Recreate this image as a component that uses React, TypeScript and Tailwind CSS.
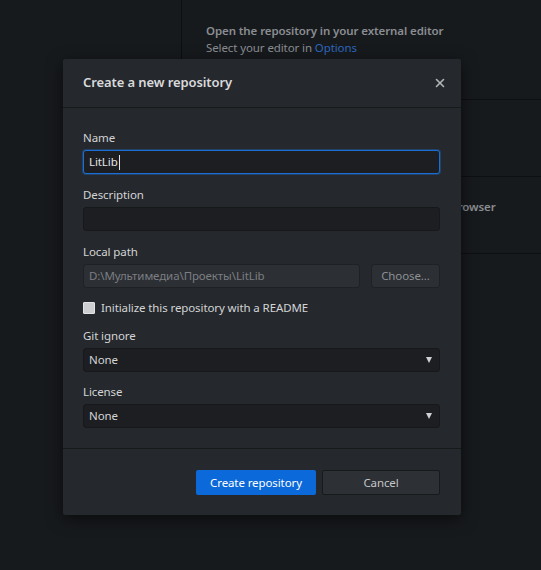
import React from 'react';
import { X } from 'lucide-react';

const font = { fontFamily: '"Noto Sans", "Open Sans", sans-serif' };

const Field = ({ label, children, className = '' }: { label: string; children: React.ReactNode; className?: string }) => (
  <div className={className}>
    <div className="mb-1 text-[11.5px] leading-4 tracking-[-0.1px] text-[#d3d4d6]">{label}</div>
    {children}
  </div>
);

const Select = ({ value }: { value: string }) => (
  <div className="flex h-6 items-center justify-between rounded-[3px] border border-[#16181a] bg-[#1c1e21] pl-[5px] pr-[7px] text-[11.5px] tracking-[-0.1px] text-[#d3d4d6]">
    <span>{value}</span>
    <svg width="6" height="6" viewBox="0 0 6 6" className="-mt-px">
      <path d="M0 0 H6 L3 6 Z" fill="#d0d1d3" />
    </svg>
  </div>
);

const Section = ({ title, desc, className = '' }: { title: string; desc: React.ReactNode; className?: string }) => (
  <div className={`border-b border-[#0e0f11] pl-6 ${className}`}>
    <div className="text-[11.5px] font-semibold leading-[17px] tracking-[-0.1px] text-[#8a8d92]">{title}</div>
    <div className="text-[11.5px] leading-[17px] tracking-[-0.1px] text-[#8a8d92]">{desc}</div>
  </div>
);

export default function App() {
  return (
    <div className="relative h-[570px] w-[541px] overflow-hidden bg-[#171a1d]" style={font}>
      <div className="flex h-full">
        <div className="w-[182px] shrink-0">
          <div className="h-[60px] border-r border-[#0d0e10]" />
        </div>
        <div className="flex-1">
          <Section
            className="h-[100px] pt-[22px]"
            title="Open the repository in your external editor"
            desc={
              <>
                Select your editor in <span className="text-[#2d67bd]">Options</span>
              </>
            }
          />
          <Section
            className="flex h-[77px] flex-col justify-center"
            title="View the files of your repository in Explorer"
            desc="Repository menu or Ctrl Shift F"
          />
          <Section
            className="flex h-[77px] flex-col justify-center"
            title="Open the repository page on GitHub in your browser"
            desc="Repository menu or Ctrl Shift G"
          />
        </div>
      </div>

      <div className="absolute left-[63px] top-[59px] w-[398px] rounded-[2px] bg-[#25282c] shadow-[0_4px_16px_rgba(0,0,0,0.6)]">
        <div className="flex h-[49px] items-center justify-between border-b border-[#17191b] pl-[20px] pr-[14px]">
          <span className="text-[13px] font-semibold tracking-[-0.1px] text-[#d9dadc]">Create a new repository</span>
          <X size={14} strokeWidth={2.8} color="#b4b6b9" />
        </div>

        <div className="pb-[20px] pl-[20px] pr-[21px] pt-[22px]">
          <Field label="Name">
            <div className="flex h-6 items-center rounded-[3px] border border-[#1b6fd4] bg-[#1c1e21] pl-[5px] text-[11.5px] tracking-[-0.1px] text-[#e2e3e5] shadow-[0_0_0_1px_rgba(27,111,212,0.35)]">
              LitLib
              <span className="ml-px h-[15px] w-px bg-[#e2e3e5]" />
            </div>
          </Field>
          <Field label="Description" className="mt-[13px]">
            <div className="h-6 rounded-[3px] border border-[#16181a] bg-[#1c1e21]" />
          </Field>
          <Field label="Local path" className="mt-[13px]">
            <div className="flex gap-[11px]">
              <div className="flex h-6 flex-1 items-center rounded-[3px] border border-[#1f2124] bg-[#2c2f33] pl-[5px] text-[11.5px] tracking-[-0.1px] text-[#7b7e83]">
                D:\Мультимедиа\Проекты\LitLib
              </div>
              <div className="flex h-6 w-[69px] items-center justify-center rounded-[3px] border border-[#1f2124] bg-[#2c2f33] text-[11.5px] tracking-[-0.1px] text-[#8d9095]">
                Choose...
              </div>
            </div>
          </Field>

          <div className="mt-[13px] flex h-[14px] items-center gap-[6px]">
            <div className="h-[12px] w-[12px] rounded-[1px] border border-[#e2e3e4] bg-[#cdced0]" />
            <span className="text-[11.5px] tracking-[-0.1px] text-[#d3d4d6]">Initialize this repository with a README</span>
          </div>

          <Field label="Git ignore" className="mt-[13px]">
            <Select value="None" />
          </Field>
          <Field label="License" className="mt-[12px]">
            <Select value="None" />
          </Field>
        </div>

        <div className="flex justify-end gap-[6px] border-t border-[#17191b] pb-[20px] pr-[21px] pt-[21px]">
          <div className="flex h-[25px] w-[120px] items-center justify-center rounded-[2px] bg-[#0b69d9] text-[11.5px] tracking-[-0.1px] text-white">
            Create repository
          </div>
          <div className="flex h-[25px] w-[118px] items-center justify-center rounded-[2px] border border-[#17191b] bg-[#2d3035] text-[11.5px] tracking-[-0.1px] text-[#c5c6c8]">
            Cancel
          </div>
        </div>
      </div>
    </div>
  );
}
